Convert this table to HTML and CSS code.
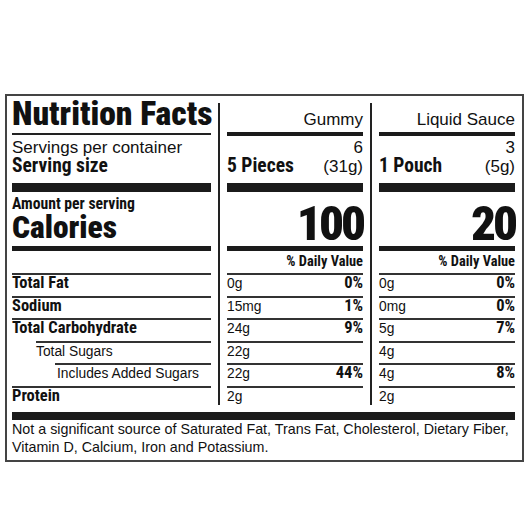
FILE: index.html
```html
<!DOCTYPE html>
<html lang="en">
<head>
  <meta charset="UTF-8" />
  <title>Nutrition Facts</title>
  <link rel="stylesheet" href="styles.css">
</head>
<body>
<div class="label">
  <div class="cols">
    <div class="col-main">
      <div class="title">Nutrition Facts</div>
      <div class="serv">
        <div class="line">Servings per container</div>
        <div class="line line-b"><b>Serving size</b></div>
      </div>
      <div class="cal">
        <div class="amount">Amount per serving</div>
        <div class="cal-name">Calories</div>
      </div>
      <div class="dv"></div>
      <div class="row">Total Fat</div>
      <div class="row">Sodium</div>
      <div class="row">Total Carbohydrate</div>
      <div class="row indent-1"><span class="v">Total Sugars</span></div>
      <div class="row indent-2"><span class="v">Includes Added Sugars</span></div>
      <div class="row">Protein</div>
    </div>

    <div class="col-prod">
      <div class="prod-name">Gummy</div>
      <div class="serv">
        <div class="line num">6</div>
        <div class="line line-b"><b>5 Pieces</b><span>(31g)</span></div>
      </div>
      <div class="cal"><div class="big">100</div></div>
      <div class="dv">% Daily Value</div>
      <div class="row"><span class="p">0%</span><span class="v">0g</span></div>
      <div class="row"><span class="p">1%</span><span class="v">15mg</span></div>
      <div class="row"><span class="p">9%</span><span class="v">24g</span></div>
      <div class="row"><span class="v">22g</span></div>
      <div class="row"><span class="p">44%</span><span class="v">22g</span></div>
      <div class="row"><span class="v">2g</span></div>
    </div>

    <div class="col-prod">
      <div class="prod-name">Liquid Sauce</div>
      <div class="serv">
        <div class="line num">3</div>
        <div class="line line-b"><b>1 Pouch</b><span>(5g)</span></div>
      </div>
      <div class="cal"><div class="big">20</div></div>
      <div class="dv">% Daily Value</div>
      <div class="row"><span class="p">0%</span><span class="v">0g</span></div>
      <div class="row"><span class="p">0%</span><span class="v">0mg</span></div>
      <div class="row"><span class="p">7%</span><span class="v">5g</span></div>
      <div class="row"><span class="v">4g</span></div>
      <div class="row"><span class="p">8%</span><span class="v">4g</span></div>
      <div class="row"><span class="v">2g</span></div>
    </div>
  </div>

  <div class="bar"></div>
  <p class="note">Not a significant source of Saturated Fat, Trans Fat, Cholesterol, Dietary Fiber, Vitamin D, Calcium, Iron and Potassium.</p>
</div>
</body>
</html>
```

FILE: styles.css
```css
body {
  margin: 0;
  background: #fff;
  color: #111;
  font-family: "Liberation Sans", Arial, sans-serif;
}

.label {
  box-sizing: border-box;
  width: 519px;
  margin: 94px 0 0 5px;
  padding: 7px 7px 4px 5px;
  border: 2px solid #444;
}

.cols {
  display: flex;
}

.col-main {
  flex: 1;
  min-width: 0;
}

.col-prod {
  flex: none;
  width: 136px;
  margin-left: 7px;
  padding-left: 7px;
  border-left: 2px solid #222;
}

/* condensed bold face for headings and nutrient names */
.title, .line-b b, .amount, .cal-name, .big, .dv, .row, .p {
  font-family: Roboto, sans-serif;
  font-stretch: condensed;
  font-weight: bold;
  white-space: nowrap;
}

.title, .cal-name, .big {
  font-weight: 900;
}

.title {
  height: 30px;
  margin-bottom: 1px;
  font-size: 33.6px;
  line-height: 22px;
  border-bottom: 2px solid #222;
}

.prod-name {
  height: 21px;
  padding-top: 8px;
  font-size: 17px;
  line-height: 17px;
  text-align: right;
  border-bottom: 4px solid #1b1b1b;
}

.serv {
  height: 44px;
  padding-top: 3px;
  border-bottom: 9px solid #1b1b1b;
}

.line {
  height: 18px;
  font-size: 17px;
  line-height: 18px;
}

.num {
  text-align: right;
}

.line-b {
  display: flex;
  justify-content: space-between;
  align-items: baseline;
}

.line-b b {
  font-size: 19.5px;
}

.cal {
  height: 54px;
  border-bottom: 5px solid #1b1b1b;
}

.amount {
  padding-top: 4px;
  font-size: 15.7px;
  line-height: 16px;
}

.cal-name {
  margin-top: 1px;
  font-size: 31.5px;
  line-height: 30px;
}

.big {
  padding-top: 12px;
  font-size: 49px;
  line-height: 40px;
  letter-spacing: -3px;
  text-align: right;
}

.dv {
  height: 22px;
  font-size: 14.4px;
  line-height: 22px;
  text-align: right;
}

.row {
  height: 20.6px;
  border-top: 2px solid #333;
  font-size: 16.5px;
  line-height: 16.6px;
}

.row:last-child {
  height: 17px;
}

.indent-1 {
  margin-left: 24px;
}

.indent-2 {
  margin-left: 43px;
  padding-left: 2px;
}

.v {
  font-family: "Liberation Sans", Arial, sans-serif;
  font-stretch: normal;
  font-weight: normal;
  font-size: 13.8px;
}

.p {
  float: right;
}

.bar {
  height: 8px;
  margin-top: 7px;
  background: #1b1b1b;
}

.note {
  margin: 0;
  font-size: 14.3px;
  line-height: 18px;
}
```
